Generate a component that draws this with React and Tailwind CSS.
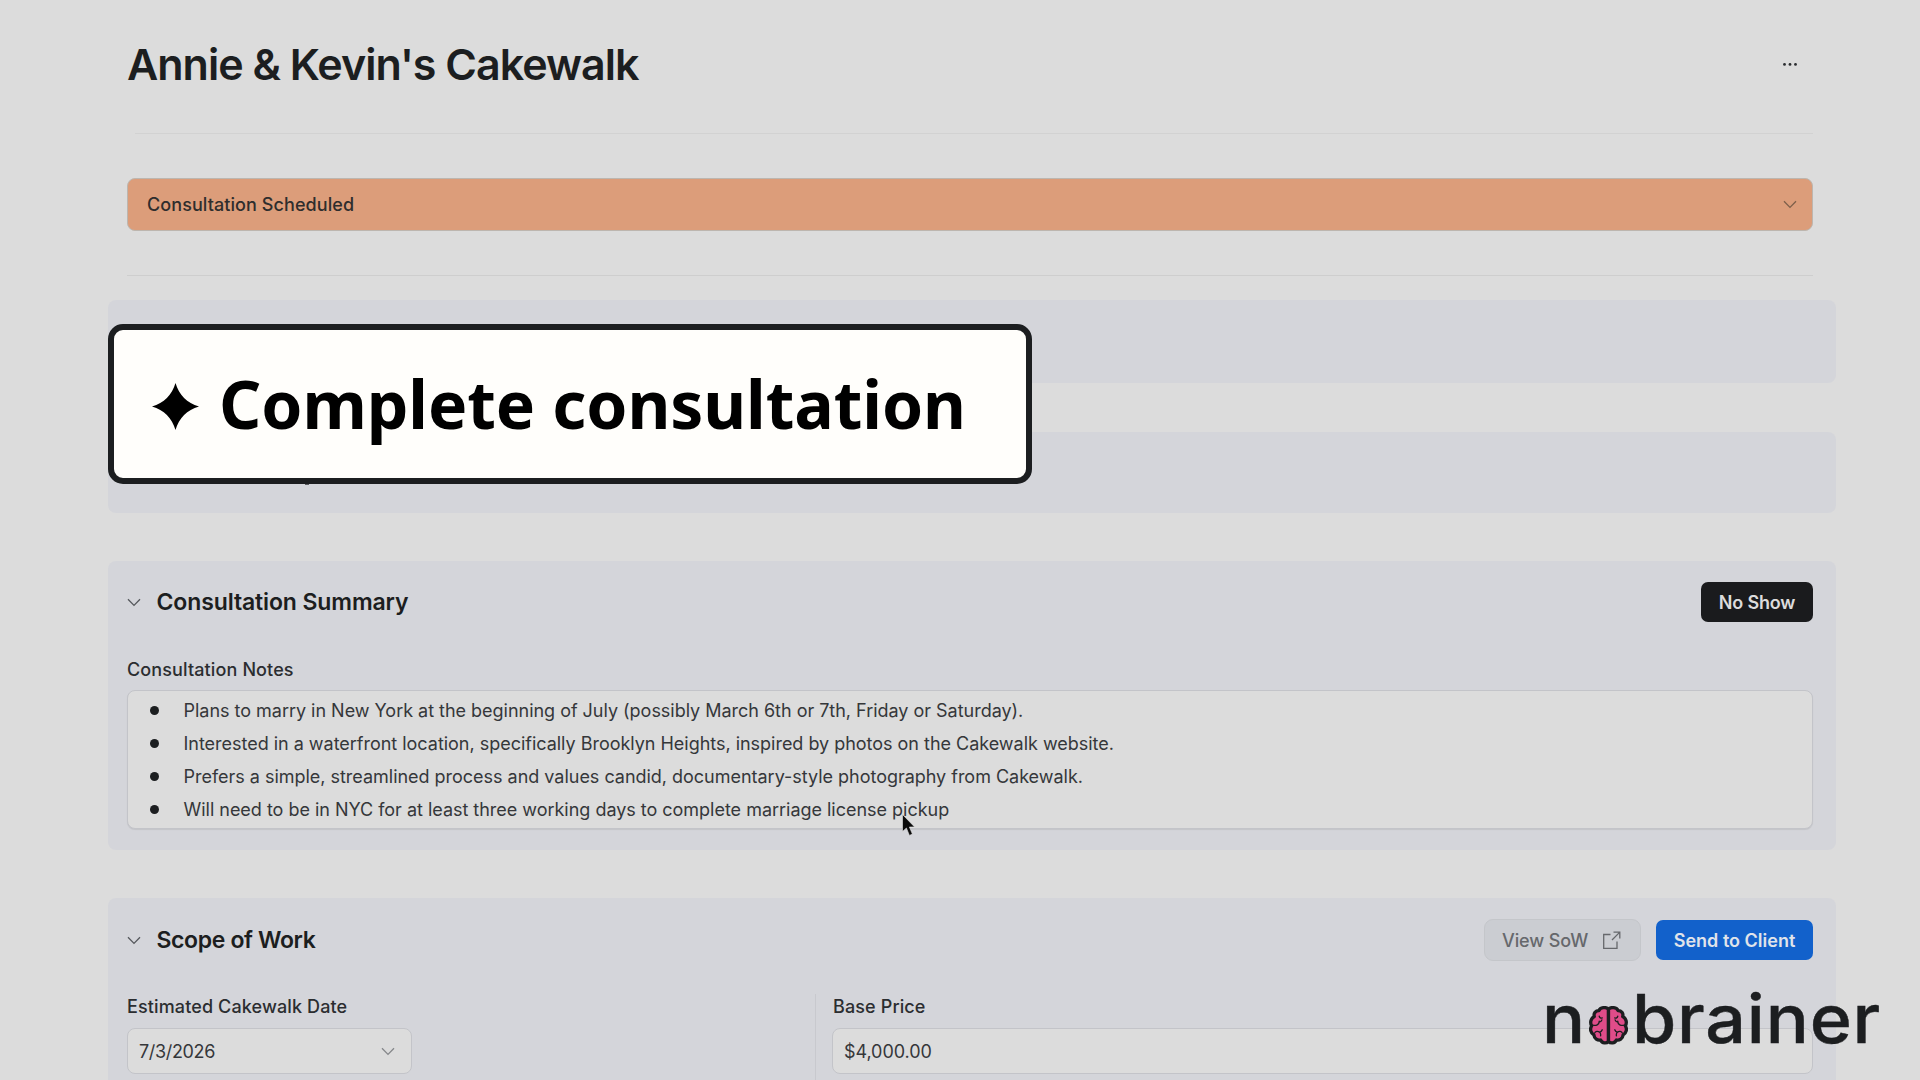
import { clsx } from 'clsx';

const NOTES = [
  'Plans to marry in New York at the beginning of July (possibly March 6th or 7th, Friday or Saturday).',
  'Interested in a waterfront location, specifically Brooklyn Heights, inspired by photos on the Cakewalk website.',
  'Prefers a simple, streamlined process and values candid, documentary-style photography from Cakewalk.',
  'Will need to be in NYC for at least three working days to complete marriage license pickup',
];

function Chevron({ className }) {
  return (
    <svg
      viewBox="0 0 14 9"
      className={clsx('h-[9px] w-[14px] shrink-0', className)}
      fill="none"
      stroke="currentColor"
      strokeWidth="1.3"
    >
      <path d="M1 1.2 7 7.4 13 1.2" />
    </svg>
  );
}

function ExternalIcon() {
  return (
    <svg
      viewBox="0 0 20 20"
      className="h-5 w-5 shrink-0"
      fill="none"
      stroke="currentColor"
      strokeWidth="1.3"
    >
      <path d="M9.5 4.5H2.7V18.3H16V11.5" />
      <path d="M12.5 2.2H18.8V8.5M18.6 2.4 11 10" />
    </svg>
  );
}

function Sparkle() {
  return (
    <svg viewBox="0 0 47 47" className="h-[47px] w-[47px] shrink-0" fill="#000">
      <path d="M23.5 0C27 12 35 20 47 23.5C35 27 27 35 23.5 47C20 35 12 27 0 23.5C12 20 20 12 23.5 0Z" />
    </svg>
  );
}

function BrainHalf() {
  return (
    <g stroke="#1c1e20" strokeLinejoin="round" strokeLinecap="round">
      <path
        strokeWidth="10"
        fill="#e04c89"
        d="M59 10C53 2 34 3 30 14C20 14 13 22 16 32C6 37 2 50 8 60C2 69 5 83 15 88C16 99 26 105 35 103C40 114 53 114 59 107Z"
      />
      <path
        strokeWidth="4"
        fill="none"
        d="M31 31C32 36 36 38 40 36M12 58C21 60 31 57 31 46M31 49C35 48 38 46 39 42M17 82C19 76 27 75 32 79C35 82 36 86 35 90M33 79C37 78 39 75 40 72"
      />
    </g>
  );
}

function Logo() {
  return (
    <div className="absolute top-[978px] left-[1542px] flex text-[67px] leading-[81px] font-medium text-[#1c1e20] [-webkit-text-stroke:0.4px_#1c1e20]">
      <span className="w-[47px] origin-left scale-x-[1.07]">n</span>
      <svg viewBox="0 0 118 118" className="mt-7 h-[39px] w-[39px] shrink-0">
        <BrainHalf />
        <g transform="translate(118 0) scale(-1 1)">
          <BrainHalf />
        </g>
      </svg>
      <span className="ml-1 origin-left scale-x-[1.07] tracking-[0.75px]">brainer</span>
    </div>
  );
}

function Callout() {
  return (
    <div className="absolute top-[324px] left-[108px] flex h-[160px] w-[924px] items-center gap-5 rounded-[15px] border-[6px] border-[#1c1e20] bg-[#fffefb] pl-[38px]">
      <div className="pt-[5px]">
        <Sparkle />
      </div>
      <span className="pb-[2px] font-['Noto_Sans',sans-serif] text-[66px] leading-[90px] font-bold tracking-[-0.08px] whitespace-nowrap text-black">
        Complete consultation
      </span>
    </div>
  );
}

function Cursor() {
  return (
    <svg viewBox="-1 -1 15 24" className="absolute top-[813px] left-[901px] h-6 w-[15px]">
      <path
        d="M.5 .5V17.6L4.4 14L7.4 21.4L10.4 20.1L7.4 13H12.6Z"
        fill="#0a0a0a"
        stroke="#e6e6e6"
        strokeWidth=".6"
      />
    </svg>
  );
}

function Panel({ className, children }) {
  return (
    <section className={clsx('-mr-[23px] -ml-[19px] rounded-lg bg-[#d4d5da] pr-[23px] pl-[19px]', className)}>
      {children}
    </section>
  );
}

function PanelTitle({ className, children }) {
  return (
    <div className="flex items-center">
      <Chevron className="mr-[15.5px] text-[#55585c]" />
      <h2 className={clsx('text-[23px] leading-7 font-semibold', className)}>{children}</h2>
    </div>
  );
}

function Label({ children }) {
  return <div className="text-lg leading-[21px] font-medium tracking-[0.12px] text-[#2b2d30]">{children}</div>;
}

export default function App() {
  return (
    <div className="relative h-[1080px] w-[1920px] overflow-hidden bg-[#dcdcdc] font-['Inter',sans-serif] text-[#1c1e20]">
      <main className="flex flex-col pr-[107px] pl-[127px]">
        <header className="mb-[5px] flex h-32 items-center justify-between pr-[15px]">
          <h1 className="text-[43px] leading-[52px] font-semibold tracking-[-1px]">Annie &amp; Kevin's Cakewalk</h1>
          <svg viewBox="0 0 16 4" className="h-1 w-4" fill="#2b2d30">
            <circle cx="2.5" cy="2.4" r="1.4" />
            <circle cx="8" cy="2.4" r="1.4" />
            <circle cx="13.5" cy="2.4" r="1.4" />
          </svg>
        </header>
        <div className="ml-2 h-px bg-[#d2d2d2]" />

        <div className="mt-11 flex h-[53px] items-center justify-between rounded-lg border border-[#bdb6af] bg-[#dc9d7a] pr-[15px] pl-[19px]">
          <span className="text-lg leading-[21px] font-medium tracking-[0.08px] text-[#2e2d2d]">Consultation Scheduled</span>
          <Chevron className="text-[#7d5f4a]" />
        </div>
        <div className="mt-11 h-px bg-[#cecece]" />

        <Panel className="mt-6 h-[83px]" />
        <Panel className="mt-[49px] h-[81px]" />

        <Panel className="mt-12 h-[289px]">
          <div className="flex h-[82px] items-center justify-between">
            <PanelTitle className="tracking-[-0.12px]">Consultation Summary</PanelTitle>
            <button className="mb-px h-10 w-[112px] rounded-[7px] bg-[#1a1b1d] pt-px text-lg leading-[21px] font-semibold tracking-[-0.15px] text-[#dcdcdc]">
              No Show
            </button>
          </div>
          <div className="pt-4">
            <Label>Consultation Notes</Label>
          </div>
          <ul className="mt-[10px] h-[139px] rounded-lg border border-[#c3c4c9] bg-[#dcdcdc] pt-[3px] pl-[22px] shadow-[0_1px_1px_rgba(0,0,0,0.08)]">
            {NOTES.map((note) => (
              <li key={note} className="flex h-[33px] items-center text-lg leading-[21px] text-[#35373a]">
                <span className="mr-[24.5px] h-[9px] w-[9px] rounded-full bg-[#1c1e20]" />
                <span className="tracking-[-0.02px] whitespace-nowrap">{note}</span>
              </li>
            ))}
          </ul>
        </Panel>

        <Panel className="mt-12 h-[200px]">
          <div className="flex h-[84px] items-center justify-between">
            <PanelTitle className="tracking-[-0.37px]">Scope of Work</PanelTitle>
            <div className="flex items-center gap-[15px]">
              <button className="flex h-[42px] w-[157px] items-center rounded-[9px] border border-[#c4c6ca] bg-[#cbcdd2] pl-[17px] text-lg leading-[21px] font-medium text-[#66686c]">
                <span className="mr-[13px] tracking-[-0.1px]">View SoW</span>
                <ExternalIcon />
              </button>
              <button className="mb-px h-10 w-[157px] rounded-[7px] bg-[#1261cb] pt-px text-lg leading-[21px] font-semibold text-[#e0e4ea]">
                Send to Client
              </button>
            </div>
          </div>
          <div className="flex">
            <div className="w-[688px] pt-[14px]">
              <Label>Estimated Cakewalk Date</Label>
              <div className="mt-[11px] flex h-[46px] w-[285px] items-center justify-between rounded-lg border border-[#c3c4c9] bg-[#dcdcdc] pr-4 pl-[11px] text-lg leading-[21px] text-[#35373a]">
                <span className="tracking-[-0.35px]">7/3/2026</span>
                <Chevron className="text-[#85878a]" />
              </div>
            </div>
            <div className="mt-3 h-[120px] flex-1 border-l border-[#c8c9ce] pt-[2px] pl-4">
              <div className="pl-px">
                <Label>Base Price</Label>
              </div>
              <div className="mt-[11px] flex h-[46px] items-center rounded-lg border border-[#c3c4c9] bg-[#dcdcdc] pl-[11px] text-lg leading-[21px] tracking-[-0.06px] text-[#35373a]">
                $4,000.00
              </div>
            </div>
          </div>
        </Panel>
      </main>

      <div className="absolute top-[484px] left-[305px] h-px w-1 bg-[#5a5c60]" />
      <Callout />
      <Cursor />
      <Logo />
    </div>
  );
}
